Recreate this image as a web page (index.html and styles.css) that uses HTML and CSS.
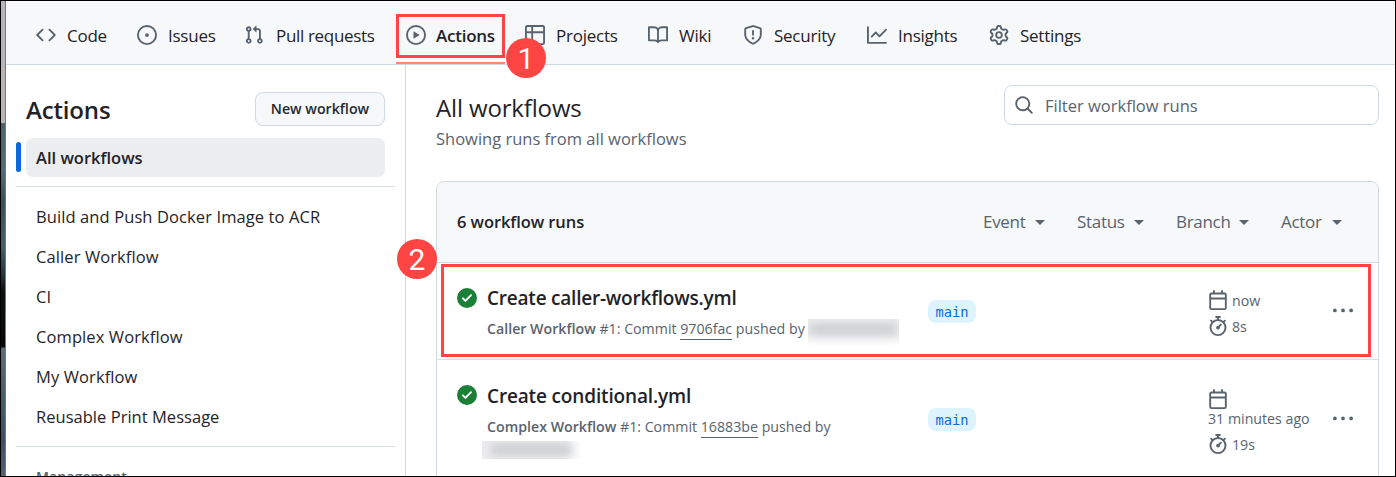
FILE: index.html
```html
<!DOCTYPE html>
<html lang="en">
<head>
<meta charset="utf-8">
<title>Actions</title>
<link rel="stylesheet" href="styles.css">
</head>
<body>
<svg class="defs" width="0" height="0" aria-hidden="true">
  <symbol id="calendar" viewBox="0 0 16 16"><path d="M4.75 0a.75.75 0 0 1 .75.75V2h5V.75a.75.75 0 0 1 1.5 0V2h1.25c.966 0 1.75.784 1.75 1.75v10.5A1.75 1.75 0 0 1 13.25 16H2.75A1.75 1.75 0 0 1 1 14.25V3.75C1 2.784 1.784 2 2.75 2H4V.75A.75.75 0 0 1 4.75 0ZM2.5 7.5v6.75c0 .138.112.25.25.25h10.5a.25.25 0 0 0 .25-.25V7.500Zm10.75-4H2.75a.25.25 0 0 0-.25.25V6h11V3.750a.25.25 0 0 0-.25-.25Z"/></symbol>
  <symbol id="stopwatch" viewBox="0 0 16 16"><path d="M5.750.75A.75.75 0 0 1 6.500 0h3a.75.75 0 0 1 0 1.500h-.75v1l-.001.041a6.718 6.718 0 0 1 3.464 1.435l.007-.006.750-.75a.749.749 0 0 1 1.275.326.749.749 0 0 1-.215.734l-.750.750-.006.007a6.750 6.750 0 1 1-10.548 0L2.720 5.030l-.750-.750a.751.751 0 0 1 .018-1.042.751.751 0 0 1 1.042-.018l.750.750.007.006A6.720 6.720 0 0 1 7.250 2.541V1.500H6.500a.75.75 0 0 1-.750-.750ZM8 14.500a5.250 5.250 0 1 0-.001-10.501A5.250 5.250 0 0 0 8 14.500Zm.389-6.700 1.330-1.330a.75.75 0 1 1 1.061 1.060L9.450 8.861A1.503 1.503 0 0 1 8 10.750a1.499 1.499 0 1 1 .389-2.950Z"/></symbol>
  <symbol id="kebab" viewBox="0 0 16 16"><path d="M8 9a1.500 1.500 0 1 0 0-3 1.500 1.500 0 0 0 0 3ZM1.500 9a1.500 1.500 0 1 0 0-3 1.500 1.500 0 0 0 0 3Zm13 0a1.500 1.500 0 1 0 0-3 1.500 1.500 0 0 0 0 3Z"/></symbol>
  <symbol id="success" viewBox="0 0 16 16"><path d="M8 16A8 8 0 1 1 8 0a8 8 0 0 1 0 16Zm3.780-9.720a.751.751 0 0 0-.018-1.042.751.751 0 0 0-1.042-.018L6.750 9.190 5.280 7.720a.751.751 0 0 0-1.042.018.751.751 0 0 0-.018 1.042l2 2a.75.75 0 0 0 1.060 0Z"/></symbol>
</svg>
<div class="frame">
  <div class="backdrop"></div>
  <div class="window">
    <nav class="repo-nav">
      <a class="tab"><svg class="icon" viewBox="0 0 16 16"><path d="m11.280 3.220 4.250 4.250a.75.75 0 0 1 0 1.060l-4.250 4.250a.749.749 0 0 1-1.275-.326.749.749 0 0 1 .215-.734L13.940 8l-3.720-3.720a.749.749 0 0 1 .326-1.275.749.749 0 0 1 .734.215Zm-6.560 0a.751.751 0 0 1 1.042.018.751.751 0 0 1 .018 1.042L2.060 8l3.720 3.720a.749.749 0 0 1-.326 1.275.749.749 0 0 1-.734-.215L.470 8.530a.75.75 0 0 1 0-1.060Z"/></svg><span>Code</span></a>
      <a class="tab"><svg class="icon" viewBox="0 0 16 16"><path d="M8 9.500a1.500 1.500 0 1 0 0-3 1.500 1.500 0 0 0 0 3Z"/><path d="M8 0a8 8 0 1 1 0 16A8 8 0 0 1 8 0ZM1.500 8a6.500 6.500 0 1 0 13 0 6.500 6.500 0 0 0-13 0Z"/></svg><span>Issues</span></a>
      <a class="tab tab-pulls"><svg class="icon" viewBox="0 0 16 16"><path d="M1.500 3.250a2.250 2.250 0 1 1 3 2.122v5.256a2.251 2.251 0 1 1-1.500 0V5.372A2.250 2.250 0 0 1 1.500 3.250Zm5.677-.177L9.573.677A.25.25 0 0 1 10 .854V2.500h1A2.500 2.500 0 0 1 13.500 5v5.628a2.251 2.251 0 1 1-1.500 0V5a1 1 0 0 0-1-1h-1v1.646a.25.25 0 0 1-.427.177L7.177 3.427a.25.25 0 0 1 0-.354ZM3.750 2.500a.75.75 0 1 0 0 1.500.75.75 0 0 0 0-1.500Zm0 9.500a.75.75 0 1 0 0 1.500.75.75 0 0 0 0-1.500Zm8.250.750a.75.75 0 1 0 1.500 0 .75.75 0 0 0-1.500 0Z"/></svg><span>Pull requests</span></a>
      <a class="tab tab-current"><svg class="icon" viewBox="0 0 16 16"><path d="M8 0a8 8 0 1 1 0 16A8 8 0 0 1 8 0ZM1.500 8a6.500 6.500 0 1 0 13 0 6.500 6.500 0 0 0-13 0Zm4.879-2.773 4.264 2.559a.25.25 0 0 1 0 .428l-4.264 2.559A.250.250 0 0 1 6 10.559V5.442a.25.25 0 0 1 .379-.215Z"/></svg><span>Actions</span></a>
      <a class="tab"><svg class="icon" viewBox="0 0 16 16"><path d="M0 1.750C0 .784.784 0 1.750 0h12.500C15.216 0 16 .784 16 1.750v12.500A1.750 1.750 0 0 1 14.250 16H1.750A1.750 1.750 0 0 1 0 14.250ZM6.500 6.500v8h7.750a.25.25 0 0 0 .25-.25V6.500Zm8-1.500V1.750a.25.25 0 0 0-.25-.25H6.500V5Zm-13 1.500v7.750c0 .138.112.25.25.25H5v-8ZM5 5V1.500H1.750a.25.25 0 0 0-.25.25V5Z"/></svg><span>Projects</span></a>
      <a class="tab"><svg class="icon" viewBox="0 0 16 16"><path d="M0 1.750A.75.75 0 0 1 .750 1h4.253c1.227 0 2.317.590 3 1.501A3.743 3.743 0 0 1 11.006 1h4.245a.75.75 0 0 1 .750.750v10.500a.75.75 0 0 1-.750.750h-4.507a2.250 2.250 0 0 0-1.591.659l-.622.621a.75.75 0 0 1-1.060 0l-.622-.621A2.250 2.250 0 0 0 5.258 13H.750a.75.75 0 0 1-.750-.750Zm7.251 10.324.004-5.073-.002-2.253A2.250 2.250 0 0 0 5.003 2.500H1.500v9h3.757a3.750 3.750 0 0 1 1.994.574ZM8.755 4.750l-.004 7.322a3.752 3.752 0 0 1 1.992-.572H14.500v-9h-3.495a2.250 2.250 0 0 0-2.250 2.250Z"/></svg><span>Wiki</span></a>
      <a class="tab"><svg class="icon" viewBox="0 0 16 16"><path d="M7.467.133a1.748 1.748 0 0 1 1.066 0l5.250 1.680A1.750 1.750 0 0 1 15 3.480V7c0 1.566-.320 3.182-1.303 4.682-.983 1.498-2.585 2.813-5.032 3.855a1.697 1.697 0 0 1-1.330 0c-2.447-1.042-4.049-2.357-5.032-3.855C1.320 10.182 1 8.566 1 7V3.480a1.755 1.755 0 0 1 1.217-1.667Zm.610 1.429a.25.25 0 0 0-.153 0l-5.250 1.680a.25.25 0 0 0-.174.238V7c0 1.358.275 2.666 1.057 3.860.784 1.194 2.121 2.340 4.366 3.297a.196.196 0 0 0 .154 0c2.245-.956 3.582-2.104 4.366-3.298C13.225 9.666 13.500 8.360 13.500 7V3.480a.251.251 0 0 0-.174-.237ZM8.750 4.750v3a.75.75 0 0 1-1.500 0v-3a.75.75 0 0 1 1.500 0ZM9 10.500a1 1 0 1 1-2 0 1 1 0 0 1 2 0Z"/></svg><span>Security</span></a>
      <a class="tab"><svg class="icon" viewBox="0 0 16 16"><path d="M1.500 1.750V13.500h13.750a.75.75 0 0 1 0 1.500H.750a.75.75 0 0 1-.750-.750V1.750a.75.75 0 0 1 1.500 0Zm14.280 2.530-5.250 5.250a.75.75 0 0 1-1.060 0L7 7.060 4.280 9.780a.751.751 0 0 1-1.042-.018.751.751 0 0 1-.018-1.042l3.250-3.250a.75.75 0 0 1 1.060 0L10 7.940l4.720-4.720a.751.751 0 0 1 1.042.018.751.751 0 0 1 .018 1.042Z"/></svg><span>Insights</span></a>
      <a class="tab"><svg class="icon" viewBox="0 0 16 16"><path d="M8 0a8.200 8.200 0 0 1 .701.031C9.444.095 9.990.645 10.160 1.290l.288 1.107c.018.066.079.158.212.224.231.114.454.243.668.386.123.082.233.090.299.071l1.103-.303c.644-.176 1.392.021 1.820.630.270.385.506.792.704 1.218.315.675.111 1.422-.364 1.891l-.814.806c-.049.048-.098.147-.088.294.016.257.016.515 0 .772-.010.147.038.246.088.294l.814.806c.475.469.679 1.216.364 1.891a7.977 7.977 0 0 1-.704 1.217c-.428.610-1.176.807-1.820.630l-1.102-.302c-.067-.019-.177-.011-.300.071a5.909 5.909 0 0 1-.668.386c-.133.066-.194.158-.211.224l-.290 1.106c-.168.646-.715 1.196-1.458 1.260a8.006 8.006 0 0 1-1.402 0c-.743-.064-1.289-.614-1.458-1.260l-.289-1.106c-.018-.066-.079-.158-.212-.224a5.738 5.738 0 0 1-.668-.386c-.123-.082-.233-.090-.299-.071l-1.103.303c-.644.176-1.392-.021-1.820-.630a8.120 8.120 0 0 1-.704-1.218c-.315-.675-.111-1.422.363-1.891l.815-.806c.050-.048.098-.147.088-.294a6.214 6.214 0 0 1 0-.772c.010-.147-.038-.246-.088-.294l-.815-.806C.635 6.045.431 5.298.746 4.623a7.920 7.920 0 0 1 .704-1.217c.428-.610 1.176-.807 1.820-.630l1.102.302c.067.019.177.011.300-.071.214-.143.437-.272.668-.386.133-.066.194-.158.211-.224l.290-1.106C6.009.645 6.556.095 7.299.030 7.530.010 7.764 0 8 0Zm-.571 1.525c-.036.003-.108.036-.137.146l-.289 1.105c-.147.561-.549.967-.998 1.189-.173.086-.340.183-.500.290-.417.278-.970.423-1.529.270l-1.103-.303c-.109-.030-.175.016-.195.045-.220.312-.412.644-.573.990-.014.031-.021.110.059.190l.815.806c.411.406.562.957.530 1.456a4.709 4.709 0 0 0 0 .582c.032.499-.119 1.050-.530 1.456l-.815.806c-.081.080-.073.159-.059.190.162.346.353.677.573.989.020.030.085.076.195.046l1.102-.303c.560-.153 1.113-.008 1.530.270.161.107.328.204.501.290.447.222.850.629.997 1.189l.289 1.105c.029.109.101.143.137.146a6.600 6.600 0 0 0 1.142 0c.036-.003.108-.036.137-.146l.289-1.105c.147-.561.549-.967.998-1.189.173-.086.340-.183.500-.290.417-.278.970-.423 1.529-.270l1.103.303c.109.029.175-.016.195-.045.220-.313.411-.644.573-.990.014-.031.021-.110-.059-.190l-.815-.806c-.411-.406-.562-.957-.530-1.456a4.709 4.709 0 0 0 0-.582c-.032-.499.119-1.050.530-1.456l.815-.806c.081-.080.073-.159.059-.190a6.464 6.464 0 0 0-.573-.989c-.020-.030-.085-.076-.195-.046l-1.102.303c-.560.153-1.113.008-1.530-.270a4.440 4.440 0 0 0-.501-.290c-.447-.222-.850-.629-.997-1.189l-.289-1.105c-.029-.110-.101-.143-.137-.146a6.600 6.600 0 0 0-1.142 0ZM11 8a3 3 0 1 1-6 0 3 3 0 0 1 6 0ZM9.500 8a1.500 1.500 0 1 0-3.001.001A1.500 1.500 0 0 0 9.500 8Z"/></svg><span>Settings</span></a>
    </nav>
    <div class="page">
      <aside class="sidebar">
        <div class="sidebar-head">
          <h2 class="sidebar-title">Actions</h2>
          <button class="new-button"><span>New workflow</span></button>
        </div>
        <div class="selected"><span class="marker"></span><a class="selected-item">All workflows</a></div>
        <ul class="workflows">
          <li>Build and Push Docker Image to ACR</li>
          <li>Caller Workflow</li>
          <li>CI</li>
          <li>Complex Workflow</li>
          <li>My Workflow</li>
          <li class="tight">Reusable Print Message</li>
        </ul>
        <div class="section-title">Management</div>
      </aside>
      <main class="content">
        <header class="content-head">
          <div>
            <h1 class="title">All workflows</h1>
            <p class="subtitle">Showing runs from all workflows</p>
          </div>
          <div class="search"><svg class="icon" viewBox="0 0 16 16"><path d="M10.680 11.740a6 6 0 0 1-7.922-8.982 6 6 0 0 1 8.982 7.922l3.040 3.040a.749.749 0 0 1-.326 1.275.749.749 0 0 1-.734-.215ZM11.500 7a4.499 4.499 0 1 0-8.997 0A4.499 4.499 0 0 0 11.500 7Z"/></svg><span>Filter workflow runs</span></div>
        </header>
        <section class="runs">
          <div class="runs-head">
            <strong class="count">6 workflow runs</strong>
            <div class="filters">
              <span class="filter event">Event<i class="caret"></i></span>
              <span class="filter status">Status<i class="caret"></i></span>
              <span class="filter branch">Branch<i class="caret"></i></span>
              <span class="filter actor">Actor<i class="caret"></i></span>
            </div>
          </div>
          <article class="run">
            <svg class="icon ok"><use href="#success"/></svg>
            <div class="run-text">
              <h3 class="run-title run-title-caller">Create caller-workflows.yml</h3>
              <div class="run-meta"><b>Caller Workflow</b> #1: Commit <a class="sha">9706fac</a> pushed by <span class="redacted redacted-inline"><i></i></span></div>
            </div>
            <span class="pill">main</span>
            <div class="times">
              <div class="time"><svg class="icon"><use href="#calendar"/></svg><span>now</span></div>
              <div class="time"><svg class="icon"><use href="#stopwatch"/></svg><span>8s</span></div>
            </div>
            <svg class="icon more"><use href="#kebab"/></svg>
          </article>
          <article class="run run-second">
            <svg class="icon ok"><use href="#success"/></svg>
            <div class="run-text">
              <h3 class="run-title">Create conditional.yml</h3>
              <div class="run-meta"><b>Complex Workflow</b> #1: Commit <a class="sha">16883be</a> pushed by</div>
              <span class="redacted redacted-block"><i></i></span>
            </div>
            <span class="pill">main</span>
            <div class="times">
              <div class="time time-wrapped"><svg class="icon"><use href="#calendar"/></svg><span>31 minutes ago</span></div>
              <div class="time"><svg class="icon"><use href="#stopwatch"/></svg><span>19s</span></div>
            </div>
            <svg class="icon more"><use href="#kebab"/></svg>
          </article>
        </section>
      </main>
    </div>
  </div>
  <div class="outline outline-tab"></div>
  <div class="outline outline-run"></div>
  <div class="step step-one">1</div>
  <div class="step step-two">2</div>
</div>
</body>
</html>
```
FILE: styles.css
```css
* { box-sizing: border-box; }
body { margin: 0; font-family: "Open Sans", "Noto Sans", sans-serif; color: #1f2328; }
h1, h2, h3, p, ul { margin: 0; padding: 0; }
.defs { position: absolute; }
.frame { position: relative; display: flex; width: 1396px; height: 477px; border: 1px solid #000; background: #fff; overflow: hidden; }
.backdrop { width: 5px; flex: none; border-right: 1px solid #77787a; background: linear-gradient(#b9b4b6 0 122px, #4d626c 122px, #536b78 170px, #3a4e58 200px, #48606b 245px, #243238 275px, #0c1110 290px, #060908 346px, #5b6b79 347px, #485b69 400px, #3e505f 440px, #526373 475px); }
.window { flex: 1; display: flex; flex-direction: column; min-width: 0; }
.icon { width: 20px; height: 20px; flex: none; fill: #59636e; }

.repo-nav { display: grid; grid-template-columns: 101px 107px 162px 119px 123px 95px 124px 122px 120px; height: 64px; flex: none; padding-left: 30px; background: #f6f8fa; border-bottom: 1px solid #d1d9e0; }
.tab { position: relative; display: flex; gap: 11px; height: 63px; padding-top: 24px; font-size: 17px; line-height: 22px; letter-spacing: -.25px; white-space: nowrap; }
.tab-pulls { gap: 12px; letter-spacing: -.33px; }
.tab-current { gap: 10px; font-weight: 600; }
.tab-current::after { content: ""; position: absolute; left: -10px; bottom: 0; width: 109px; height: 2px; background: #fd8c73; }

.page { flex: 1; display: flex; min-height: 0; }
.sidebar { width: 400px; flex: none; padding: 27px 10px 0; border-right: 1px solid #d1d9e0; }
.sidebar-head { display: flex; justify-content: space-between; padding: 0 10px; }
.sidebar-title { font-size: 24px; line-height: 36px; font-weight: 600; letter-spacing: -.15px; }
.new-button { width: 130px; height: 34px; padding: 0; border: 1px solid #d1d9e0; border-radius: 8px; background: #f6f8fa; color: #25292e; font: 600 14.2px/30px "Open Sans", sans-serif; white-space: nowrap; }
.selected { display: flex; align-items: center; gap: 5px; margin-top: 10px; height: 39px; }
.marker { width: 5px; height: 30px; margin-top: -1px; border-radius: 3px; background: #0969da; }
.selected-item { width: 359px; height: 39px; padding-left: 10px; border-radius: 7px; background: #ecedef; font-size: 16.5px; line-height: 40px; font-weight: 600; }
.workflows { width: 379px; margin-top: 9px; height: 261px; padding: 10px 0 0 20px; list-style: none; border: solid #d8e0e6; border-width: 1px 0; font-size: 16.5px; line-height: 40px; letter-spacing: .1px; white-space: nowrap; }
.tight { letter-spacing: .03px; }
.section-title { padding: 20px 0 0 20px; color: #59636e; font-size: 14.2px; line-height: 20px; font-weight: 600; }

.content { flex: 1; min-width: 0; padding: 20px 16px 0 30px; }
.content-head { display: flex; justify-content: space-between; height: 96px; }
.title { margin-top: 5px; font-size: 24px; line-height: 36px; font-weight: 400; letter-spacing: -.15px; }
.subtitle { margin-top: 1px; color: #59636e; font-size: 16.5px; line-height: 24px; }
.search { display: flex; align-items: center; gap: 11px; width: 375px; height: 40px; padding: 0 9px; border: 1px solid #d1d9e0; border-radius: 8px; color: #59636e; font-size: 16.5px; }
.runs { height: 310px; border: 1px solid #d1d9e0; border-radius: 8px 8px 0 0; }
.runs-head { display: flex; align-items: center; justify-content: space-between; height: 81px; padding: 0 36px 2px 20px; border-bottom: 1px solid #d1d9e0; border-radius: 7px 7px 0 0; background: #f6f8fa; }
.count { font-size: 16.5px; font-weight: 600; letter-spacing: -.08px; }
.filters { display: flex; gap: 32px; color: #59636e; font-size: 17px; letter-spacing: -.3px; }
.filter { display: flex; align-items: center; justify-content: space-between; }
.event { width: 62px; }
.status { width: 67px; }
.branch { width: 73px; }
.actor { width: 61px; }
.caret { margin-top: 3px; border: 5px solid transparent; border-top-color: #59636e; border-bottom: 0; }
.run { display: grid; grid-template-columns: 20px 451px 280px 125px 20px; height: 97px; padding: 25px 0 0 20px; border-bottom: 1px solid #d8e0e6; }
.run-second { height: 120px; padding-top: 25px; }
.ok { fill: #1a7f37; }
.run-text { padding-left: 10px; white-space: nowrap; }
.run-title { font-size: 19px; line-height: 20px; font-weight: 600; letter-spacing: -.15px; }
.run-title-caller { letter-spacing: -.22px; }
.run-second .run-title { line-height: 22px; }
.run-meta { display: flex; margin-top: 11px; color: #59636e; font-size: 14.2px; line-height: 20px; white-space: pre; }
.run-second .run-meta { margin-top: 10px; }
.run-meta b { font-weight: 600; }
.sha { height: 21px; border-bottom: 1px solid #59636e; }
.redacted { display: block; overflow: hidden; background: linear-gradient(#ececed, #ececed 55%, #fff); }
.redacted i { display: block; background: #cbcdd1; filter: blur(4px); }
.redacted-inline { width: 91px; height: 27px; }
.redacted-inline i { width: 86px; height: 11px; margin: 5px 2px; }
.redacted-block { width: 100px; height: 18px; margin: 3px 0 0 -5px; background: linear-gradient(90deg, #ececed, #ececed 82%, #fff); }
.redacted-block i { width: 80px; height: 11px; margin: 3px 9px; }
.pill { width: 48px; height: 23px; margin-top: 12px; border-radius: 8px; background: #ddf4ff; color: #0969da; font: 13.7px/24px "DejaVu Sans Mono", monospace; text-align: center; }
.run-second .pill { margin-top: 23px; line-height: 25px; }
.times { display: flex; flex-direction: column; gap: 6px; margin-top: 2px; color: #59636e; font-size: 14.2px; line-height: 22px; white-space: nowrap; }
.run-second .times { margin-top: 4px; }
.time { display: flex; gap: 4px; height: 20px; }
.time-wrapped { flex-direction: column; gap: 0; height: 39px; line-height: 20px; }
.more { margin-top: 13px; }
.run-second .more { margin-top: 24px; }

.outline { position: absolute; border: 3px solid #ff4444; }
.outline-tab { left: 395px; top: 13px; width: 109px; height: 44px; }
.outline-run { left: 440px; top: 263px; width: 930px; height: 93px; }
.step { position: absolute; width: 40px; height: 40px; border-radius: 50%; background: #ff4444; color: #fff; font: 30px/41px Roboto, Arial, sans-serif; text-align: center; }
.step-one { left: 505px; top: 37px; }
.step-two { left: 396px; top: 238px; }
```
